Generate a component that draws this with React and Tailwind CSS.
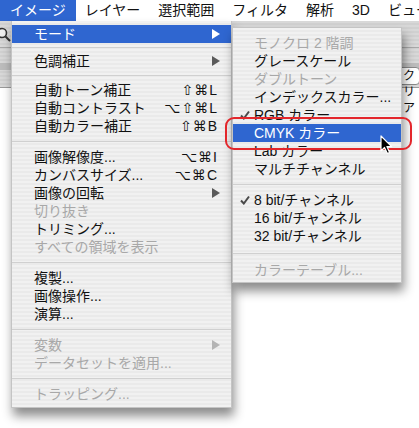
import React from 'react';

// Photoshop (Mac OS X) "イメージ > モード" menu

const mainItems = [
    { t: 'モード', arrow: true, hl: true },
    { sep: 9 },
    { t: '色調補正', arrow: true },
    { sep: 11 },
    { t: '自動トーン補正', sc: '⇧⌘', key: 'L' },
    { t: '自動コントラスト', sc: '⌥⇧⌘', key: 'L' },
    { t: '自動カラー補正', sc: '⇧⌘', key: 'B' },
    { sep: 13 },
    { t: '画像解像度...', sc: '⌥⌘', key: 'I' },
    { t: 'カンバスサイズ...', sc: '⌥⌘', key: 'C' },
    { t: '画像の回転', arrow: true },
    { t: '切り抜き', dis: true },
    { t: 'トリミング...' },
    { t: 'すべての領域を表示', dis: true },
    { sep: 13 },
    { t: '複製...' },
    { t: '画像操作...' },
    { t: '演算...' },
    { sep: 13 },
    { t: '変数', dis: true, arrow: true },
    { t: 'データセットを適用...', dis: true },
    { sep: 13 },
    { t: 'トラッピング...', dis: true },
];

const subItems = [
    { t: 'モノクロ 2 階調', dis: true },
    { t: 'グレースケール' },
    { t: 'ダブルトーン', dis: true },
    { t: 'インデックスカラー...' },
    { t: 'RGB カラー', check: true },
    { t: 'CMYK カラー', hl: true },
    { t: 'Lab カラー' },
    { t: 'マルチチャンネル' },
    { sep: 13 },
    { t: '8 bit/チャンネル', check: true },
    { t: '16 bit/チャンネル' },
    { t: '32 bit/チャンネル' },
    { sep: 16 },
    { t: 'カラーテーブル...', dis: true },
];

const Arrow = ({ color }) => (
    <svg width="8" height="10" viewBox="0 0 8 10">
        <polygon points="0,0 8,5 0,10" fill={color} />
    </svg>
);

const Check = () => (
    <svg width="10" height="10" viewBox="0 0 10 10">
        <path d="M1 5.5 L3.8 8.5 L9 1.5" stroke="#4a4a4a" strokeWidth="2" fill="none" />
    </svg>
);

const Separator = ({ h }) => (
    <div className="flex flex-col justify-center" style={{ height: h }}>
        <div className="h-px bg-[#d0d0d0]" />
    </div>
);

const stripes =
    'bg-[repeating-linear-gradient(180deg,#f1f1f1_0px,#f1f1f1_2px,#eaeaea_2px,#eaeaea_4px)]';

const MainRow = ({ item }) => {
    const color = item.hl ? 'text-white' : item.dis ? 'text-[#a8a8a8]' : 'text-[#111]';
    return (
        <div
            className={`flex items-center h-[18px] pl-[22px] pr-[11px] ${
                item.hl ? 'bg-[#2f66d0]' : ''
            } ${color}`}
        >
            <span className="flex-1 leading-[18px] whitespace-nowrap">{item.t}</span>
            {item.sc && (
                <span className="flex items-center pr-[3px] leading-[18px] text-[#111]">
                    <span className="font-['DejaVu_Sans',sans-serif] text-[14px] tracking-[1px]">
                        {item.sc}
                    </span>
                    <span className="text-[14px]">{item.key}</span>
                </span>
            )}
            {item.arrow && (
                <Arrow color={item.hl ? '#ffffff' : item.dis ? '#b4b4b4' : '#5a5a5a'} />
            )}
        </div>
    );
};

const SubRow = ({ item }) => {
    const color = item.hl ? 'text-white' : item.dis ? 'text-[#a8a8a8]' : 'text-[#111]';
    return (
        <div
            className={`flex items-center h-[18px] pl-[7px] ${
                item.hl ? 'bg-[#2f66d0]' : ''
            } ${color}`}
        >
            <span className="w-[14px] flex items-center">{item.check && <Check />}</span>
            <span className="leading-[18px] whitespace-nowrap">{item.t}</span>
        </div>
    );
};

const MenuBar = () => {
    const items = ['レイヤー', '選択範囲', 'フィルタ', '解析', '3D', 'ビュー'];
    return (
        <div className="flex items-center h-[21px] bg-white text-[14px] text-[#111] whitespace-nowrap">
            <div className="w-[11px] h-full overflow-hidden flex justify-end items-center">
                <span className="pr-[9px]">編集</span>
            </div>
            <div className="h-full flex items-center px-[10px] bg-[#2f66d0] text-white">
                イメージ
            </div>
            {items.map((t) => (
                <div key={t} className="h-full flex items-center px-[9px]">
                    {t}
                </div>
            ))}
        </div>
    );
};

const OptionsBar = () => (
    <div className="relative h-[67px] bg-[repeating-linear-gradient(180deg,#d8d8d8_0px,#d8d8d8_2px,#d0d0d0_2px,#d0d0d0_4px)] border-b border-[#9a9a9a]">
        <svg className="absolute left-[-4px] top-[6px]" width="16" height="16" viewBox="0 0 16 16">
            <circle cx="6" cy="6" r="4.5" stroke="#333" strokeWidth="1.6" fill="#eee" />
            <line x1="9.5" y1="9.5" x2="14" y2="14" stroke="#333" strokeWidth="2" />
        </svg>
        <div className="absolute left-0 right-0 top-[26px] h-px bg-[#a8a8a8]" />
        <div className="absolute left-0 right-0 top-[42px] h-[7px] bg-[#bcbcbc]" />
        <div className="absolute left-[398px] top-[46px] h-[18px] px-[4px] rounded-[4px] border border-[#888] bg-white text-[12px] leading-[16px] text-[#111]">
            クリア
        </div>
    </div>
);

const Cursor = () => (
    <svg className="absolute left-[380px] top-[135px]" width="13" height="20" viewBox="0 0 13 20">
        <path
            d="M1 1 L1 16 L4.5 12.5 L7.3 18.5 L9.6 17.5 L6.9 11.6 L11.6 11.6 Z"
            fill="#000"
            stroke="#fff"
            strokeWidth="1.2"
            strokeLinejoin="round"
        />
    </svg>
);

export default function App() {
    return (
        <div className="relative w-[419px] h-[428px] overflow-hidden bg-white font-['Liberation_Sans','Noto_Sans_CJK_JP','DejaVu_Sans',sans-serif] text-[14px]">
            <MenuBar />
            <OptionsBar />

            {/* main menu */}
            <div
                className={`absolute left-[11px] top-[21px] w-[221px] pt-[4px] pb-[4px] ${stripes} border-l border-r border-b border-[#c4c4c4] shadow-[2px_8px_10px_rgba(0,0,0,0.45)]`}
            >
                {mainItems.map((it, i) =>
                    it.sep ? <Separator key={i} h={it.sep} /> : <MainRow key={i} item={it} />
                )}
            </div>

            {/* submenu: モード */}
            <div
                className={`absolute left-[232px] top-[27px] w-[170px] pt-[6px] pb-[3px] ${stripes} border border-[#c4c4c4] shadow-[2px_8px_10px_rgba(0,0,0,0.45)]`}
            >
                {subItems.map((it, i) =>
                    it.sep ? <Separator key={i} h={it.sep} /> : <SubRow key={i} item={it} />
                )}
            </div>

            {/* red highlight ring */}
            <div className="absolute left-[225px] top-[117px] w-[187px] h-[33px] rounded-[9px] border-2 border-[#e3262b]" />

            <Cursor />
        </div>
    );
}
